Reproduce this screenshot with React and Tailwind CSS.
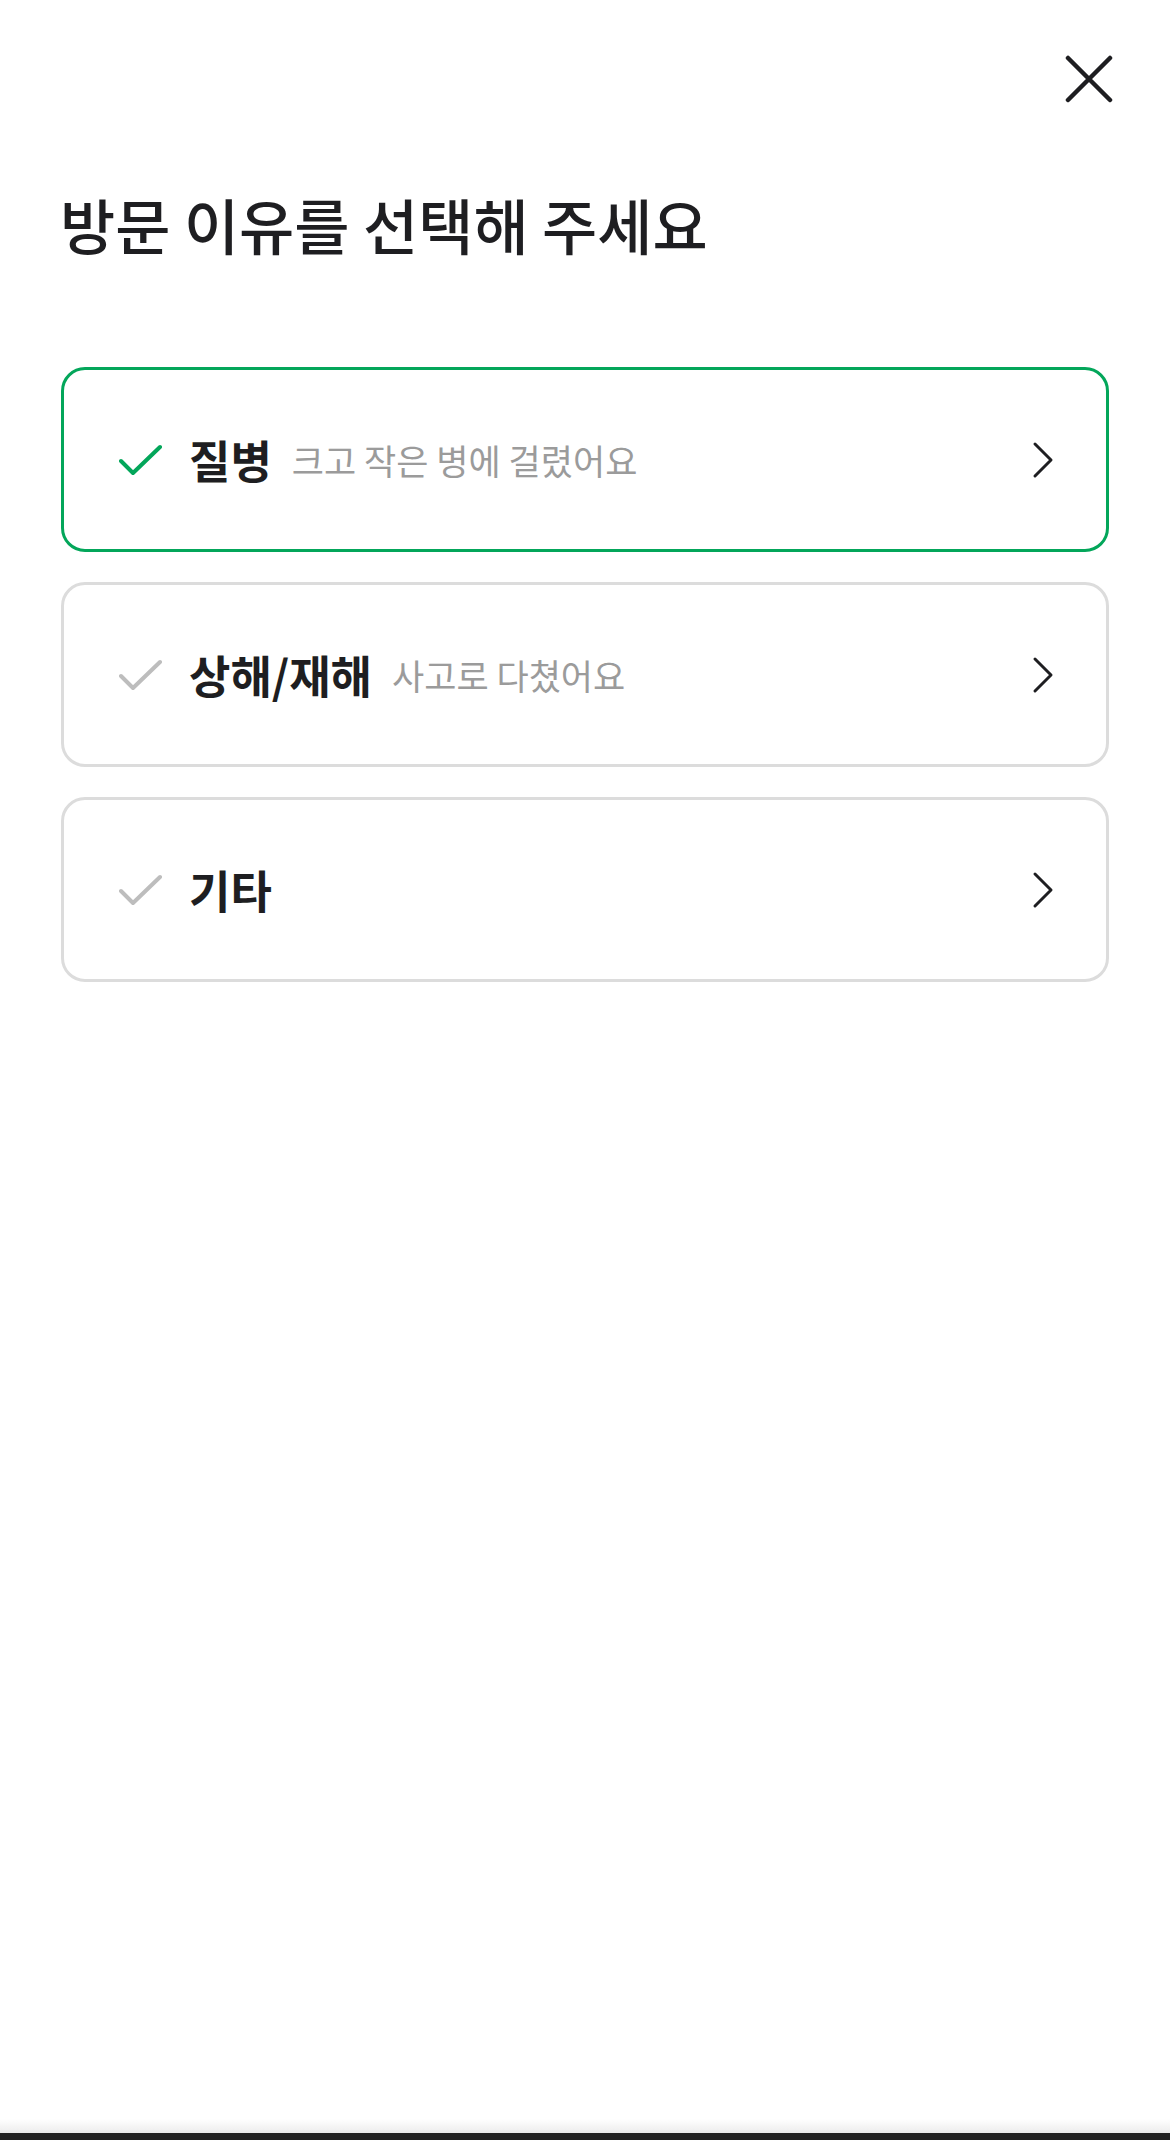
import { useState } from "react";

const reasons = [
    { id: "disease", label: "질병", desc: "크고 작은 병에 걸렸어요" },
    { id: "injury", label: "상해/재해", desc: "사고로 다쳤어요" },
    { id: "etc", label: "기타", desc: "" },
];

function CloseIcon() {
    return (
        <svg width="48" height="48" viewBox="0 0 48 48" fill="none" stroke="#1e1e21" strokeWidth="4.5" strokeLinecap="round">
            <path d="M3 3L45 45M45 3L3 45" />
        </svg>
    );
}

function CheckIcon({ active }) {
    return (
        <svg width="44" height="32" viewBox="0 0 44 32" fill="none" stroke={active ? "#03a65a" : "#bdbdbd"} strokeWidth="4" strokeLinecap="round" strokeLinejoin="round">
            <polyline points="2,17 14,29 41,3" />
        </svg>
    );
}

function ChevronIcon() {
    return (
        <svg width="22" height="38" viewBox="0 0 22 38" fill="none" stroke="#1e1e21" strokeWidth="3" strokeLinecap="round" strokeLinejoin="round">
            <polyline points="3,3 19,19 3,35" />
        </svg>
    );
}

function ReasonCard({ item, active, onSelect }) {
    return (
        <button
            type="button"
            onClick={() => onSelect(item.id)}
            className={`flex items-center h-[185px] w-full rounded-[24px] border-[3px] bg-white pl-[55px] pr-[52px] text-left ${active ? "border-[#03a65a]" : "border-[#dcdcdc]"}`}
        >
            <CheckIcon active={active} />
            <span className="ml-[26px] text-[45px] leading-[58px] font-bold text-[#1e1e21]">{item.label}</span>
            {item.desc && <span className="ml-[20px] text-[35px] leading-[58px] text-[#9b9b9b]">{item.desc}</span>}
            <span className="ml-auto flex">
                <ChevronIcon />
            </span>
        </button>
    );
}

export default function App() {
    const [selected, setSelected] = useState("disease");

    return (
        <div className="min-h-[2140px] flex flex-col bg-white font-['Noto_Sans_CJK_KR','Noto_Sans',sans-serif]">
            <header className="flex justify-end pt-[55px] pr-[57px]">
                <CloseIcon />
            </header>

            <h1 className="mt-[87px] px-[60px] text-[60px] leading-[68px] font-medium text-[#1e1e21]">
                방문 이유를 선택해 주세요
            </h1>

            <div className="mt-[109px] px-[61px] flex flex-col gap-[30px]">
                {reasons.map(r => (
                    <ReasonCard key={r.id} item={r} active={selected === r.id} onSelect={setSelected} />
                ))}
            </div>

            <div className="flex-1" />
            <div className="h-[14px] bg-gradient-to-b from-white to-[#ececec]" />
            <div className="h-[7px] bg-[#232323]" />
        </div>
    );
}
